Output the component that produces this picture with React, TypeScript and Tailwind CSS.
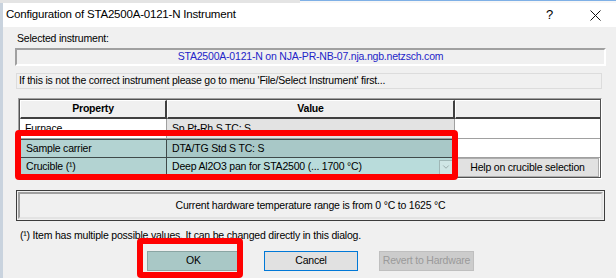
import { ChevronDown } from 'lucide-react'

function Cell({ className = '', children }: { className?: string; children?: React.ReactNode }) {
	return <div className={`flex items-center px-[5px] truncate ${className}`}>{children}</div>
}

export default function App() {
	return (
		<div className="relative w-[616px] h-[278px] overflow-hidden bg-[#f0f0f0] text-[10.5px] tracking-[-0.2px] text-black font-['Liberation_Sans',Arial,sans-serif]">
			{/* window behind + frame top */}
			<div className="flex h-[3px]">
				<div className="w-[300px] bg-[#e4e4e4]" />
				<div className="flex-1 border-t border-[#7fb0e6] bg-[#f7f7f7]" />
			</div>

			<div className="flex h-[275px]">
				<div className="w-[3px] bg-[#c9d3de]" />
				<div className="flex-1 flex flex-col">
					{/* Title bar */}
					<div className="flex items-center h-[24px] bg-white pl-[3px] text-[11.5px]">
						<span>Configuration of STA2500A-0121-N Instrument</span>
						<span className="ml-auto mr-[37px] text-[13px]">?</span>
						<svg width="11" height="11" viewBox="0 0 11 11" className="mr-[15px]">
							<path d="M0.5 0.5 L10.5 10.5 M10.5 0.5 L0.5 10.5" stroke="#111" strokeWidth="1" />
						</svg>
					</div>

					{/* Client */}
					<div className="flex-1 flex flex-col pl-[12px] pr-[10px]">
						<div className="mt-[5px] h-[13px] leading-[13px] pl-[2px]">Selected instrument:</div>

						<div className="mt-[3px] h-[18px] flex items-center justify-center border-2 border-t-[#a0a0a0] border-l-[#a0a0a0] border-b-white border-r-white bg-[#f0f0f0] text-[#2424c8]">
							STA2500A-0121-N on NJA-PR-NB-07.nja.ngb.netzsch.com
						</div>

						<div className="mt-[7px] ml-[1px] mr-[4px] h-[16px] flex items-center pl-[2px] border border-[#dcdcdc] bg-[#f0f0f0]">
							If this is not the correct instrument please go to menu 'File/Select Instrument' first...
						</div>

						{/* Table */}
						<div className="mt-[9px] ml-[3px] mr-[4px] border border-t-[#a0a0a0] border-l-[#a0a0a0] border-b-white border-r-white">
							<div className="grid grid-cols-[147px_288px_1fr] grid-rows-[19px_20px_19px_19px] bg-white border border-[#505050]">
								<Cell className="justify-center font-bold bg-[#f0f0f0] border-t border-l border-t-white border-l-white border-r-2 border-b-2 border-r-[#404040] border-b-[#404040]">Property</Cell>
								<Cell className="justify-center font-bold bg-[#f0f0f0] border-t border-l border-t-white border-l-white border-r-2 border-b-2 border-r-[#404040] border-b-[#404040]">Value</Cell>
								<Cell className="bg-[#f0f0f0] border-t border-l border-t-white border-l-white border-b-2 border-b-[#404040]" />

								<Cell className="bg-white border-r border-b border-[#a0a0a0]">Furnace</Cell>
								<Cell className="bg-[#e3e3e3] border-r border-b border-[#a0a0a0]">Sp Pt-Rh S TC: S</Cell>
								<Cell className="bg-white border-b border-[#a0a0a0]" />

								<Cell className="bg-[#b3d3d2] border border-[#3f4a4a]">Sample carrier</Cell>
								<Cell className="bg-[#a8c8c7] border-y border-r border-[#3f4a4a]">DTA/TG Std S TC: S</Cell>
								<Cell className="bg-white border-b border-[#a0a0a0]" />

								<Cell className="bg-[#b3d3d2] border-x border-b border-[#3f4a4a]">Crucible (¹)</Cell>
								<div className="flex items-center bg-[#b9dcdb] border-b border-r border-[#3f4a4a] pl-[5px] pr-[1px]">
									<span className="flex-1 truncate">Deep Al2O3 pan for STA2500 (... 1700 °C)</span>
									<div className="w-[14px] h-[15px] flex items-center justify-center bg-[#cfe6e5] border border-[#9fb7b6]">
										<ChevronDown size={10} strokeWidth={1.5} color="#7a8a8a" />
									</div>
								</div>
								<div className="flex items-center justify-center bg-[#e1e1e1] border border-[#adadad] mx-px whitespace-nowrap">
									Help on crucible selection
								</div>
							</div>
						</div>

						<div className="mt-[11px] ml-[1px] mr-px h-[31px] border border-[#3c3c3c] bg-[#f0f0f0] p-px">
							<div className="h-full flex items-center justify-center border-2 border-t-[#a0a0a0] border-l-[#a0a0a0] border-b-[#e3e3e3] border-r-[#e3e3e3]">
								Current hardware temperature range is from 0 °C to 1625 °C
							</div>
						</div>

						<div className="mt-[8px] ml-[5px] h-[13px] leading-[13px]">
							(¹) Item has multiple possible values. It can be changed directly in this dialog.
						</div>

						<div className="mt-[9px] flex pl-[132px] gap-[24px] whitespace-nowrap">
							<div className="w-[93px] h-[20px] flex items-center justify-center bg-[#a9c8c6] border border-[#8aa5a3]">OK</div>
							<div className="w-[94px] h-[20px] flex items-center justify-center bg-[#e1e1e1] border border-[#0078d7]">Cancel</div>
							<div className="ml-[-3px] w-[95px] h-[20px] flex items-center justify-center bg-[#cccccc] border border-[#bfbfbf] text-[#9a9a9a]">Revert to Hardware</div>
						</div>
					</div>
				</div>
			</div>

			{/* Highlight annotations */}
			<div className="absolute left-[15px] top-[130px] w-[443px] h-[50px] border-[6px] border-[#ff0000] rounded-[4px]" />
			<div className="absolute left-[137px] top-[238px] w-[106px] h-[40px] border-[6px] border-[#ff0000] rounded-[4px]" />
		</div>
	)
}
